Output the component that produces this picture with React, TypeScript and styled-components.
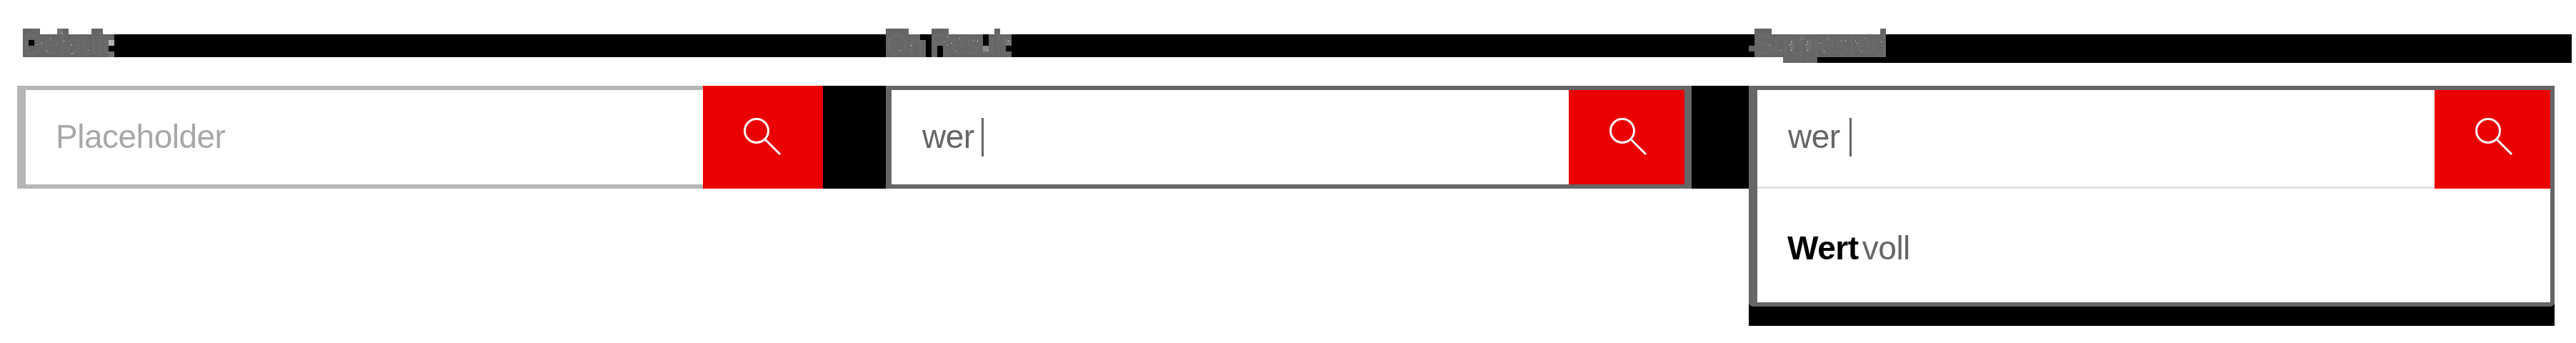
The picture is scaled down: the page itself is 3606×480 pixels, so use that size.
import React from 'react';
import styled, { createGlobalStyle } from 'styled-components';

const GlobalStyle = createGlobalStyle`
  *, *::before, *::after { box-sizing: border-box; }
  body { margin: 0; background: #fff; }
`;

const Page = styled.div`
  width: 3606px;
  height: 480px;
  background: #fff;
  font-family: 'Liberation Sans', Arial, Helvetica, sans-serif;
  overflow: hidden;
`;

const Headings = styled.div`
  display: flex;
  height: 80px;
  padding: 40px 6px 0 32px;
  margin-bottom: 40px;
`;

const Heading = styled.div<{ $width: number; $bar: number }>`
  display: grid;
  flex: none;
  width: ${(p) => p.$width}px;
  height: ${(p) => p.$bar + 8}px;
  > * { grid-area: 1 / 1; }
`;

const Bar = styled.div<{ $step?: boolean }>`
  margin-top: 8px;
  background: linear-gradient(#000, #000) 0 0 / 100% 32px no-repeat,
    ${(p) => (p.$step ? 'linear-gradient(#000, #000) 88px 0 / 1056px 100% no-repeat' : 'none')};
`;

const Tiles = styled.svg`
  display: block;
  overflow: visible;
  fill: #666;
`;

const HeadingText = styled.h2`
  margin: 0;
  font-size: 40px;
  font-weight: 400;
  line-height: 44px;
  letter-spacing: -0.7px;
  color: #868686;
  mix-blend-mode: overlay;
  white-space: nowrap;
  z-index: 1;
`;

const Row = styled.div`
  display: flex;
  align-items: flex-start;
  padding-left: 24px;
`;

const Gap = styled.div<{ $width: number }>`
  flex: none;
  width: ${(p) => p.$width}px;
  height: 144px;
  background: #000;
`;

const Field = styled.div<{ $width: number }>`
  display: flex;
  flex: none;
  width: ${(p) => p.$width}px;
  height: 144px;
`;

const Input = styled.div<{ $color: string; $left: number; $pad: number }>`
  flex: 1;
  display: flex;
  align-items: center;
  border: 6px solid ${(p) => p.$color};
  border-left-width: ${(p) => p.$left}px;
  border-right: 0;
  padding-left: ${(p) => p.$pad}px;
  background: #fff;
`;

const Value = styled.span<{ $color: string }>`
  padding-bottom: 2px;
  font-size: 46px;
  line-height: 52px;
  letter-spacing: -0.5px;
  color: ${(p) => p.$color};
`;

const Caret = styled.span<{ $gap: number }>`
  width: 3px;
  height: 54px;
  margin-left: ${(p) => p.$gap}px;
  background: #666;
`;

const Button = styled.div<{ $width: number; $top: number; $right?: number; $framed?: boolean }>`
  flex: none;
  width: ${(p) => p.$width}px;
  padding: ${(p) => p.$top}px 0 0 56px;
  border: 0 solid #666;
  border-width: ${(p) => (p.$framed ? `6px ${p.$right}px 6px 0` : '0')};
  background: #ea0000;
`;

const Suggest = styled.div`
  flex: none;
  width: 1128px;
  height: 336px;
  background: #000;
`;

const SuggestFrame = styled.div`
  height: 309px;
  border: 6px solid #666;
  border-left-width: 12px;
  border-radius: 0 0 6px 6px;
  background: #fff;
`;

const SuggestField = styled.div`
  display: flex;
  height: 138px;
`;

const SuggestInput = styled.div`
  flex: 1;
  display: flex;
  align-items: center;
  padding: 0 0 3px 43px;
  border-bottom: 3px solid #e2e2e2;
`;

const SuggestItem = styled.div`
  display: flex;
  align-items: center;
  height: 159px;
  padding: 8px 0 0 42px;
`;

const Match = styled.b`
  padding-bottom: 2px;
  margin-right: 5px;
  font-size: 46px;
  line-height: 52px;
  letter-spacing: -0.4px;
  color: #000;
`;

const Glass = styled.svg`
  display: block;
  fill: none;
  stroke: #fff;
  stroke-width: 3;
`;

function SearchIcon() {
  return (
    <Glass width="54" height="54" viewBox="0 0 54 54">
      <circle cx="19" cy="19" r="16.5" />
      <path d="M31 31 52 52" />
    </Glass>
  );
}

type TileRun = [number, number, number, number, string?];
type Speck = [number, number];

const defaultTiles: TileRun[] = [
  [0, 0, 24, 8], [48, 0, 8, 8, '#747474'], [56, 0, 8, 8], [96, 0, 16, 8], [0, 8, 128, 32],
  [8, 16, 8, 8, '#000'], [120, 16, 8, 8, '#b3b3b3'], [120, 24, 8, 8, '#000'], [120, 32, 8, 8, '#727272'],
];
const defaultSpecks: Speck[] = [
  [54, 6], [38, 13], [26, 20], [19, 22], [33, 31], [57, 17], [67, 22], [68, 35], [70, 34], [91, 30], [120, 17],
];

const resultTiles: TileRun[] = [
  [0, 0, 32, 8], [64, 0, 24, 8], [152, 0, 8, 8], [0, 8, 48, 32], [48, 16, 8, 24], [64, 8, 112, 32],
  [72, 24, 8, 16, '#000'], [136, 8, 8, 16, '#000'], [136, 24, 8, 8, '#8b8b8b'], [168, 24, 8, 8, '#000'],
  [168, 16, 8, 8, '#777'],
];
const resultSpecks: Speck[] = [
  [19, 30], [35, 23], [81, 18], [87, 11], [91, 20], [86, 23], [98, 31], [103, 13], [122, 17], [128, 17],
  [143, 30], [171, 17],
];

const suggestTiles: TileRun[] = [
  [0, 0, 24, 8], [176, 0, 8, 8], [0, 8, 184, 32], [40, 40, 48, 8], [-8, 24, 8, 8],
  [64, 8, 8, 8, '#6f6f6f'], [50, 18, 6, 12, '#707070'], [73, 18, 7, 12, '#707070'],
];
const suggestSpecks: Speck[] = [
  [21, 23], [36, 30], [49, 22], [51, 18], [51, 30], [74, 18], [72, 22], [74, 30], [90, 20], [102, 13],
  [97, 31], [121, 17], [127, 17], [141, 17], [143, 20], [155, 13], [150, 31], [177, 18],
];

function TileLabel({ tiles, specks, width }: { tiles: TileRun[]; specks: Speck[]; width: number }) {
  return (
    <Tiles width={width} height="40" viewBox={`0 0 ${width} 40`} shapeRendering="crispEdges">
      {tiles.map(([x, y, w, h, fill], i) => (
        <rect key={i} x={x} y={y} width={w} height={h} fill={fill} />
      ))}
      {specks.map(([x, y], i) => (
        <rect key={`s${i}`} x={x} y={y} width={1} height={1} fill="#fff" />
      ))}
    </Tiles>
  );
}

export default function App() {
  return (
    <Page>
      <GlobalStyle />
      <Headings>
        <Heading $width={1208} $bar={32}>
          <Bar />
          <TileLabel tiles={defaultTiles} specks={defaultSpecks} width={128} />
          <HeadingText>Default</HeadingText>
        </Heading>
        <Heading $width={1216} $bar={32}>
          <Bar />
          <TileLabel tiles={resultTiles} specks={resultSpecks} width={176} />
          <HeadingText>On Result</HeadingText>
        </Heading>
        <Heading $width={1144} $bar={40}>
          <Bar $step />
          <TileLabel tiles={suggestTiles} specks={suggestSpecks} width={184} />
          <HeadingText>Suggested</HeadingText>
        </Heading>
      </Headings>
      <Row>
        <Field $width={1128}>
          <Input $color="#b6b6b6" $left={12} $pad={42}>
            <Value $color="#a8a8a8">Placeholder</Value>
          </Input>
          <Button $width={168} $top={44}><SearchIcon /></Button>
        </Field>
        <Gap $width={88} />
        <Field $width={1128}>
          <Input $color="#666" $left={8} $pad={43}>
            <Value $color="#666">wer</Value>
            <Caret $gap={10.4} />
          </Input>
          <Button $width={172} $top={38} $right={10} $framed><SearchIcon /></Button>
        </Field>
        <Gap $width={80} />
        <Suggest>
          <SuggestFrame>
            <SuggestField>
              <SuggestInput>
                <Value $color="#666">wer</Value>
                <Caret $gap={13.4} />
              </SuggestInput>
              <Button $width={162} $top={38}><SearchIcon /></Button>
            </SuggestField>
            <SuggestItem>
              <Match>Wert</Match>
              <Value $color="#666">voll</Value>
            </SuggestItem>
          </SuggestFrame>
        </Suggest>
      </Row>
    </Page>
  );
}
